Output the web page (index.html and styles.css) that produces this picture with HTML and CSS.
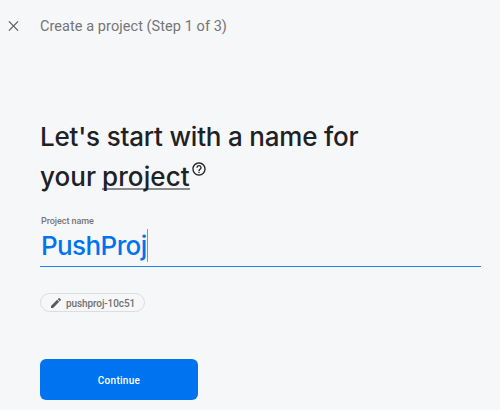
FILE: index.html
```html
<!DOCTYPE html>
<html lang="en">
<head>
<meta charset="utf-8">
<title>Create a project</title>
<link rel="stylesheet" href="styles.css">
</head>
<body>
<header class="bar">
  <svg class="close" viewBox="0 0 12 12"><path d="M1 1l10 10M11 1L1 11"/></svg>
  <span class="bar-title">Create a project (Step 1 of 3)</span>
</header>
<main class="content">
  <h1 class="heading">
    <span class="line first">Let's start with a name for</span>
    <span class="line second"><span class="words">your <span class="term">project</span></span><svg class="help" viewBox="0 0 24 24"><path d="M11 18h2v-2h-2v2zm1-16C6.480 2 2 6.480 2 12s4.480 10 10 10 10-4.480 10-10S17.520 2 12 2zm0 18c-4.410 0-8-3.590-8-8s3.590-8 8-8 8 3.590 8 8-3.590 8-8 8zm0-14c-2.210 0-4 1.790-4 4h2c0-1.100.9-2 2-2s2 .9 2 2c0 2-3 1.750-3 5h2c0-2.250 3-2.500 3-5 0-2.210-1.790-4-4-4z"/></svg></span>
  </h1>
  <div class="label">Project name</div>
  <div class="field"><span class="value">PushProj</span><span class="caret"></span></div>
  <div class="chip">
    <svg class="pencil" viewBox="3 3 18 18"><path d="M3 17.250V21h3.750L17.810 9.940l-3.750-3.750L3 17.250zM20.710 7.040a1 1 0 0 0 0-1.410l-2.340-2.340a1 1 0 0 0-1.410 0l-1.830 1.830 3.750 3.750 1.830-1.830z"/></svg>
    <span class="chip-text">pushproj-10c51</span>
  </div>
  <button class="continue">Continue</button>
</main>
</body>
</html>
```

FILE: styles.css
```css
* { box-sizing: border-box; }
body { margin: 0; height: 410px; overflow: hidden; background: #f6f7f9; font-family: Roboto, sans-serif; }
.bar { display: flex; align-items: center; height: 52px; padding-left: 8px; color: #757575; }
.close { width: 11px; height: 12px; margin-right: 21px; fill: none; stroke: #5c5c5c; stroke-width: 1.4; }
.bar-title { font-size: 14.5px; letter-spacing: .06px; white-space: nowrap; }
.content { padding: 65px 19px 0 40px; }
.heading { margin: 0; font-family: Inter, sans-serif; font-size: 26px; font-weight: 500; line-height: 40px; color: #202124; white-space: nowrap; }
.line { display: flex; height: 40px; }
.first { letter-spacing: -0.2px; }
.second { letter-spacing: 0.1px; word-spacing: -1.3px; }
.term { display: inline-block; height: 33px; border-bottom: 2px solid #8b8c8e; text-decoration-line: none; }
.help { width: 16px; height: 16px; margin: 4px 0 0 1px; fill: #202124; }
.label { height: 12px; margin-top: 17px; padding-left: 1px; font-size: 9px; font-weight: 500; line-height: 14px; letter-spacing: -.05px; color: #757575; }
.field { display: flex; align-items: flex-start; height: 41px; padding-left: 1px; border-bottom: 1px solid #257ff2; font-family: Inter, sans-serif; font-size: 26px; font-weight: 500; line-height: 40px; color: #0073f0; }
.value { letter-spacing: -0.6px; }
.caret { width: 1px; height: 33px; margin-top: 3px; background: #5a9fe9; }
.chip { display: flex; align-items: center; width: 105px; height: 19px; margin-top: 26px; padding-left: 10px; border: 1px solid #dcdddf; border-radius: 10px; color: #707070; }
.pencil { width: 10px; height: 10px; margin-right: 5px; fill: #5a5a5a; }
.chip-text { padding-top: 1px; font-size: 10px; font-weight: 500; letter-spacing: -.1px; white-space: nowrap; }
.continue { display: block; width: 158px; height: 41px; margin-top: 47px; padding: 1px 0 0; border: 0; border-radius: 6px; background: #0073f0; color: #fff; font: 500 10px Roboto, sans-serif; letter-spacing: .3px; }
```
